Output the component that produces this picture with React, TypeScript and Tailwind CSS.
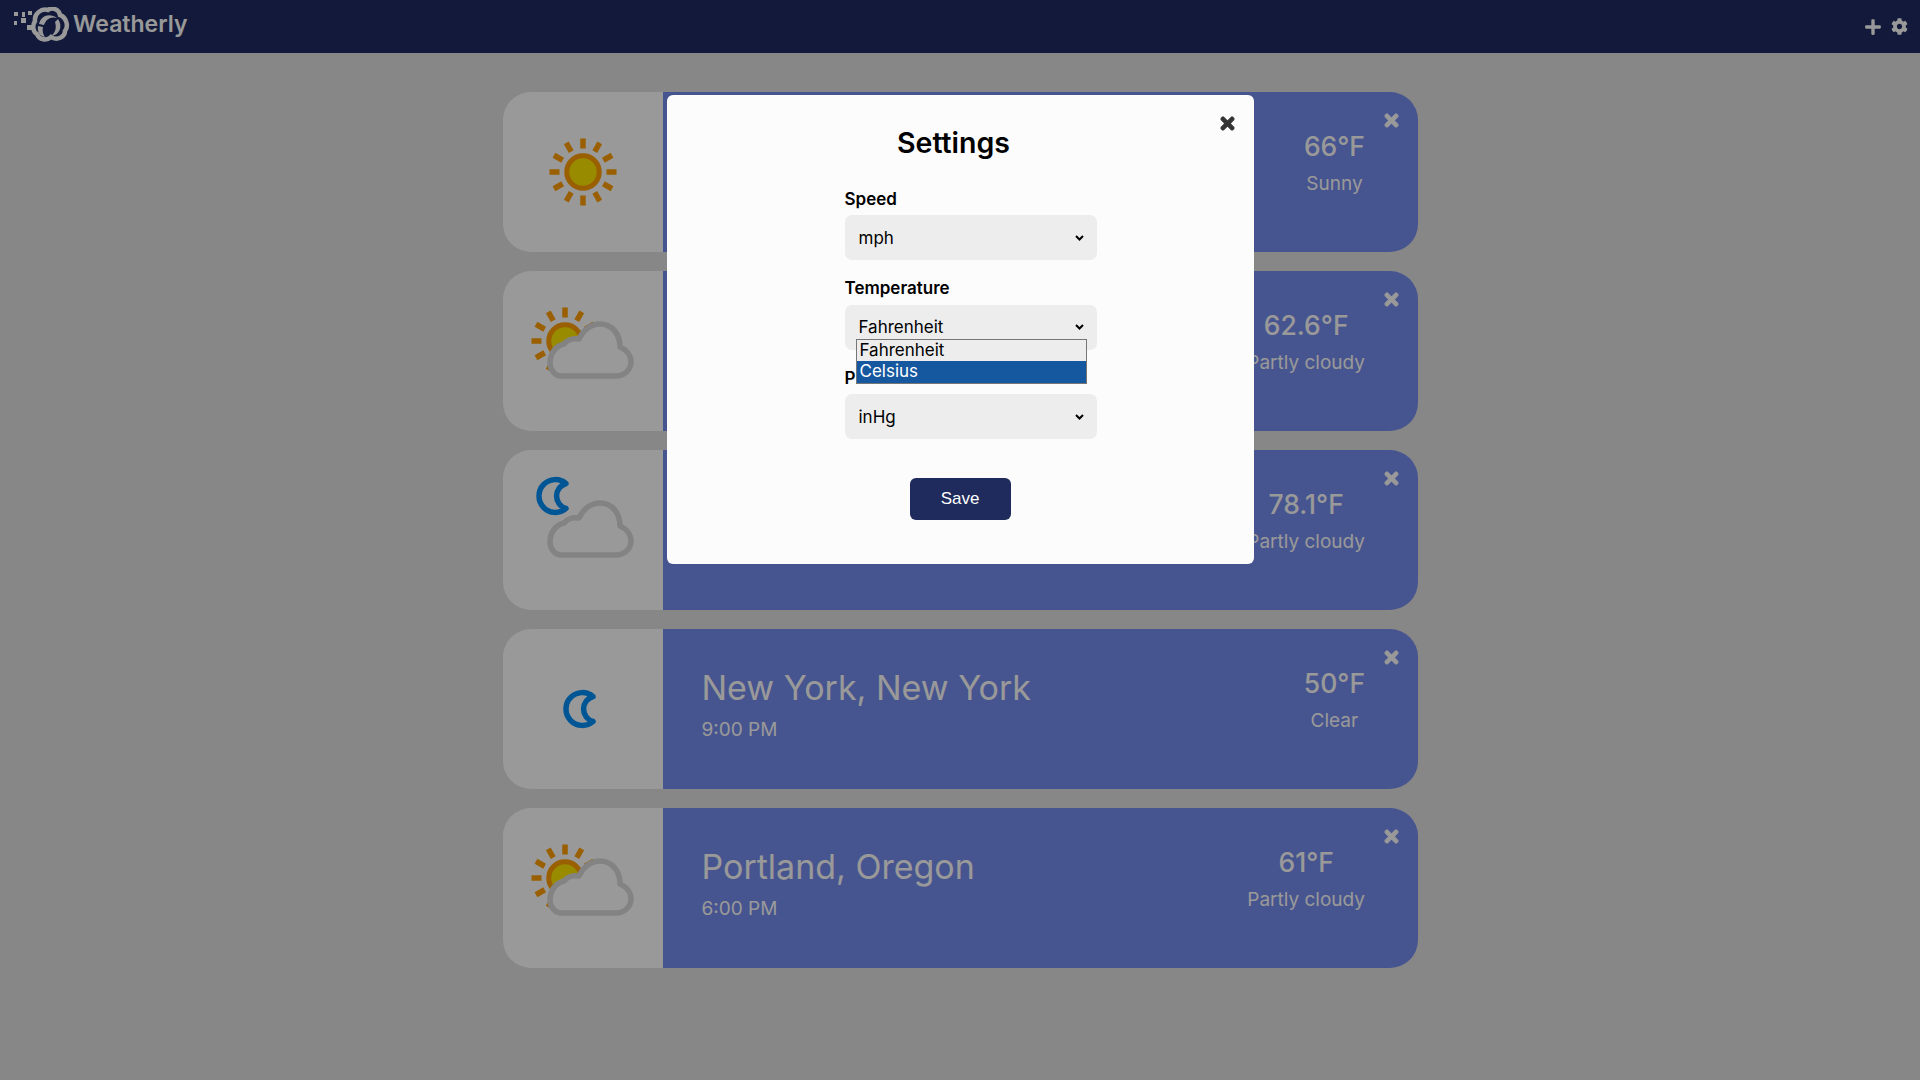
import { FaCog, FaPlus, FaTimes } from "react-icons/fa";

type Weather = "sunny" | "partly" | "nightCloud" | "moon";

interface City {
  name?: string;
  time?: string;
  temp: string;
  summary: string;
  icon: Weather;
}

const CITIES: City[] = [
  { temp: "66°F", summary: "Sunny", icon: "sunny" },
  { temp: "62.6°F", summary: "Partly cloudy", icon: "partly" },
  { temp: "78.1°F", summary: "Partly cloudy", icon: "nightCloud" },
  { name: "New York, New York", time: "9:00 PM", temp: "50°F", summary: "Clear", icon: "moon" },
  { name: "Portland, Oregon", time: "6:00 PM", temp: "61°F", summary: "Partly cloudy", icon: "partly" },
];

const RAY_ANGLES = [0, 30, 60, 90, 120, 150, 180, 210, 240, 270, 300, 330];

function Sun({ cx, cy }: { cx: number; cy: number }) {
  return (
    <g>
      {RAY_ANGLES.map((a) => (
        <rect key={a} x={cx - 2.75} y={cy - 33.5} width={5.5} height={10} fill="#ff9f00" transform={`rotate(${a} ${cx} ${cy})`} />
      ))}
      <circle cx={cx} cy={cy} r={16.25} fill="#ffe800" stroke="#ff9f00" strokeWidth={5} />
    </g>
  );
}

const MOON_PATH = "M41 17.5 A16.4 16.4 0 1 0 41 42.5 A13 13 0 0 1 41 17.5 Z";

function Moon() {
  return <path d={MOON_PATH} fill="#ffffff" stroke="#0090f8" strokeWidth={5.5} strokeLinejoin="round" />;
}

function Cloud() {
  return (
    <path
      d="M34 70 C26 70 22 63 22 57 C22 47 28 40 36 38 C39 34 45 32 51 33 C55 24 63 18 72 18 C84 18 92 28 92 41 C99 44 103 50 103 56 C103 64 96 70 88 70 Z"
      fill="#ffffff"
      stroke="#dadada"
      strokeWidth={5.5}
      strokeLinejoin="round"
    />
  );
}

function WeatherIcon({ icon }: { icon: Weather }) {
  if (icon === "sunny") {
    return (
      <svg width="90" height="90" viewBox="0 0 90 90">
        <Sun cx={45} cy={45} />
      </svg>
    );
  }
  if (icon === "moon") {
    return (
      <svg width="60" height="60" viewBox="0 0 60 60">
        <g transform="translate(-1 0)">
          <Moon />
        </g>
      </svg>
    );
  }
  return (
    <svg width="110" height="110" viewBox="0 -10 110 110" className="overflow-visible">
      {icon === "partly" ? (
        <Sun cx={37} cy={35} />
      ) : (
        <g transform="translate(-3 -19)">
          <Moon />
        </g>
      )}
      <Cloud />
    </svg>
  );
}

function Logo() {
  return (
    <svg width="56" height="36" viewBox="0 0 56 36" fill="none">
      <g fill="#ffffff">
        <rect x="0" y="5" width="4" height="4" />
        <rect x="8" y="5" width="3" height="5" />
        <rect x="14" y="4" width="4" height="4" />
        <rect x="0" y="14" width="3" height="4" />
        <rect x="7" y="11" width="5" height="5" />
        <rect x="13" y="18" width="5" height="5" />
      </g>
      <path
        d="M21 14 C20 7 27 1 34 3 C38 0 45 2 46 8 C52 10 55 19 51 24 C51 30 43 34 37 30 C33 34 25 33 23 27 C19 25 18 19 21 14"
        stroke="#ffffff"
        strokeWidth="4.5"
        strokeLinecap="round"
      />
      <g fill="#ffffff">
        <path d="M25 17 C27 8 36 6 43 11 C37 9 32 12 30 18 Z" />
        <path d="M44 12 C49 19 46 28 37 29 C41 26 43 21 41 15 Z" />
        <path d="M24 19 C23 25 26 29 31 30 C29 27 28 24 29 20 Z" />
      </g>
    </svg>
  );
}

function CloseIcon({ className }: { className: string }) {
  return <FaTimes className={`absolute text-[19px] [stroke-width:30] ${className}`} />;
}

function CityCard({ city }: { city: City }) {
  return (
    <div className="flex h-40 overflow-hidden rounded-[28px]">
      <div className="flex w-40 shrink-0 items-center justify-center bg-white">
        <WeatherIcon icon={city.icon} />
      </div>
      <div className="relative flex flex-1 items-center justify-between bg-[#768cee] pl-[39px] pr-[52.5px] text-white">
        <div className="-mt-[10px]">
          <div className="text-[34px] leading-[42px]">{city.name}</div>
          <div className="mt-[10px] text-[19px] leading-[22px]">{city.time}</div>
        </div>
        <div className="-mt-[21px] text-center">
          <div className="text-[26.5px] font-medium leading-[34px]">{city.temp}</div>
          <div className="mt-[10px] text-[19px] leading-[22px]">{city.summary}</div>
        </div>
        <CloseIcon className="right-[17px] top-[19px] text-white" />
      </div>
    </div>
  );
}

function SelectField({ label, value, options }: { label: string; value: string; options: string[] }) {
  return (
    <div className="mb-[17px]">
      <div className="mb-[4.5px] text-[17px] font-semibold leading-[23px] text-black">{label}</div>
      <div className="relative">
        <select
          defaultValue={value}
          className="h-[45px] w-[252px] appearance-none rounded-[7px] bg-[#ededed] pl-[14px] pr-[30px] pt-[2px] text-[17px] text-black"
        >
          {options.map((o) => (
            <option key={o}>{o}</option>
          ))}
        </select>
        <svg className="pointer-events-none absolute left-[230px] top-[19.5px]" width="9" height="6" viewBox="0 0 9 6" fill="none">
          <path d="M1 1 L4.5 4.5 L8 1" stroke="#000000" strokeWidth="2" />
        </svg>
      </div>
    </div>
  );
}

export default function App() {
  return (
    <div className="relative min-h-screen bg-[#e1e1e1] font-['Inter',sans-serif]">
      <header className="flex h-[53px] items-center justify-between bg-[#1e2b61] pl-[14px] pr-[12px] text-white">
        <div className="flex items-center gap-[3px] pb-[4px]">
          <Logo />
          <span className="text-[23px] font-semibold">Weatherly</span>
        </div>
        <div className="flex items-center gap-[9px]">
          <FaPlus className="text-[18px]" />
          <FaCog className="text-[17px]" />
        </div>
      </header>

      <main className="mx-auto flex w-[915px] flex-col gap-[19px] pt-[39px]">
        {CITIES.map((c, i) => (
          <CityCard key={i} city={c} />
        ))}
      </main>

      {/* Settings dialog, dims the whole page behind it */}
      <div className="fixed inset-0 bg-black/40 pt-[95px]">
        <div className="relative mx-auto h-[469px] w-[587px] rounded-[6px] bg-[#fcfcfc] pt-[28px]">
          <CloseIcon className="right-[16.5px] top-[18.5px] text-[#333333]" />
          <h2 className="pr-[13px] text-center text-[28.5px] font-semibold leading-[40px] text-black">Settings</h2>
          <div className="relative ml-[178px] mt-[24.5px] w-[252px]">
            <SelectField label="Speed" value="mph" options={["mph", "km/h"]} />
            <SelectField label="Temperature" value="Fahrenheit" options={["Fahrenheit", "Celsius"]} />
            <SelectField label="Pressure" value="inHg" options={["inHg", "hPa"]} />
            {/* open dropdown list of the temperature select */}
            <div className="absolute left-[11px] top-[151.5px] h-[45px] w-[231px] overflow-hidden border border-[#767676] bg-[#ededed] text-[17px] leading-[21px]">
              <div className="h-[21px] pl-[3px] text-black">Fahrenheit</div>
              <div className="h-[22px] bg-[#1558a0] pl-[3px] text-white">Celsius</div>
            </div>
          </div>
          <div className="mt-[39px] flex justify-center">
            <button className="h-[42px] w-[101px] rounded-[6px] bg-[#1e2b5c] font-['Liberation_Sans',sans-serif] text-[17px] text-white">
              Save
            </button>
          </div>
        </div>
      </div>
    </div>
  );
}
